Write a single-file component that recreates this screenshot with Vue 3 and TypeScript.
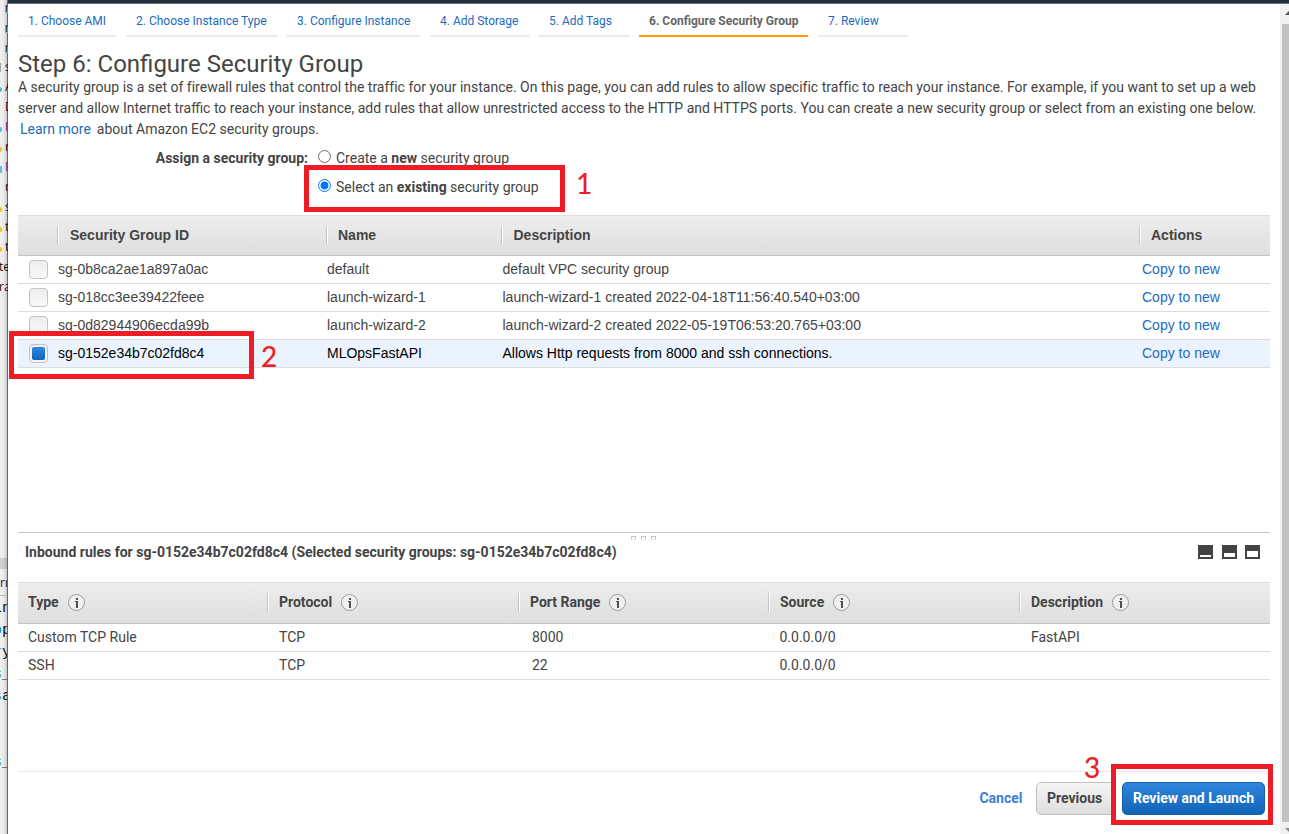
<script setup lang="ts">
interface Tab { label: string; cls: string }
interface Group { id: string; name: string; desc: string; selected?: boolean }
interface Rule { type: string; protocol: string; port: string; source: string; desc: string }
interface EdgeLine { text: string; mark?: string; tone?: string }

const tabs: Tab[] = [
  { label: '1. Choose AMI', cls: 'w1' },
  { label: '2. Choose Instance Type', cls: 'w2' },
  { label: '3. Configure Instance', cls: 'w3' },
  { label: '4. Add Storage', cls: 'w4' },
  { label: '5. Add Tags', cls: 'w5' },
  { label: '6. Configure Security Group', cls: 'w6 active' },
  { label: '7. Review', cls: 'w7' },
]
const groups: Group[] = [
  { id: 'sg-0b8ca2ae1a897a0ac', name: 'default', desc: 'default VPC security group' },
  { id: 'sg-018cc3ee39422feee', name: 'launch-wizard-1', desc: 'launch-wizard-1 created 2022-04-18T11:56:40.540+03:00' },
  { id: 'sg-0d82944906ecda99b', name: 'launch-wizard-2', desc: 'launch-wizard-2 created 2022-05-19T06:53:20.765+03:00' },
  { id: 'sg-0152e34b7c02fd8c4', name: 'MLOpsFastAPI', desc: 'Allows Http requests from 8000 and ssh connections.', selected: true },
]
const ruleHeads: string[] = ['Type', 'Protocol', 'Port Range', 'Source', 'Description']
const rules: Rule[] = [
  { type: 'Custom TCP Rule', protocol: 'TCP', port: '8000', source: '0.0.0.0/0', desc: 'FastAPI' },
  { type: 'SSH', protocol: 'TCP', port: '22', source: '0.0.0.0/0', desc: '' },
]
const files: EdgeLine[] = [
  { text: 'n', tone: 'hl' }, { text: 'n', tone: 'hl' }, { text: 'n', tone: 'hl' },
  { text: 's', mark: 'grey' }, { text: 'A', mark: 'blue' }, { text: 'D', tone: 'maroon' },
  { text: 'I', mark: 'blue', tone: 'purple' }, { text: 'n', mark: 'gold', tone: 'maroon' },
  { text: 'F', mark: 'sq', tone: 'violet' }, { text: 'n', tone: 'maroon' },
  { text: 's', mark: 'gold' }, { text: 't', mark: 'gold' }, { text: 't', mark: 'gold' },
  { text: 'te', tone: 'flush' }, { text: 'ra', tone: 'flush' },
]
const code: { a: string; b: string }[] = [
  { a: '', b: 'in' }, { a: 'o', b: 'p' }, { a: 'r', b: 'y' }, { a: 's', b: '_' },
  { a: 's', b: 'a' }, { a: '', b: '' }, { a: '', b: '' }, { a: 's', b: '_' },
]
</script>

<template>
  <div class="screen">
    <aside class="edge">
      <div class="files">
        <div v-for="(f, i) in files" :key="i" class="file" :class="f.tone">
          <i v-if="f.mark" class="mark" :class="f.mark"></i><span>{{ f.text }}</span>
        </div>
      </div>
      <div class="edge-bar"></div>
      <div class="edge-tab">rr</div>
      <div class="code">
        <div v-for="(c, i) in code" :key="i" class="code-line"><b>{{ c.a }}</b><span>{{ c.b }}</span></div>
      </div>
    </aside>

    <div class="window">
      <div class="topbar"></div>
      <div class="body">
        <main class="content">
          <nav class="tabs">
            <a v-for="t in tabs" :key="t.label" class="tab" :class="t.cls"><span>{{ t.label }}</span></a>
          </nav>
          <h1>Step 6: Configure Security Group</h1>
          <p class="intro">
            <span class="l1">A security group is a set of firewall rules that control the traffic for your instance. On this page, you can add rules to allow specific traffic to reach your instance. For example, if you want to set up a web</span><br>
            <span class="l2">server and allow Internet traffic to reach your instance, add rules that allow unrestricted access to the HTTP and HTTPS ports. You can create a new security group or select from an existing one below.</span><br>
            <span class="l3"><a>Learn more</a>about Amazon EC2 security groups.</span>
          </p>

          <section class="assign">
            <div class="assign-label">Assign a security group:</div>
            <div class="options">
              <div class="option first"><i class="radio"></i><span>Create a <b>new</b> security group</span></div>
              <div class="option"><i class="radio on"></i><span>Select an <b>existing</b> security group</span><em class="box box1"></em><em class="num num1">1</em></div>
            </div>
          </section>

          <section class="groups">
            <div class="g-row g-head">
              <div></div><div class="sep">Security Group ID</div><div class="sep">Name</div><div class="sep">Description</div><div class="sep">Actions</div>
            </div>
            <div v-for="g in groups" :key="g.id" class="g-row g-item" :class="{ selected: g.selected }">
              <div class="check-cell"><i class="check"><i v-if="g.selected"></i></i></div>
              <div>{{ g.id }}</div><div>{{ g.name }}</div><div>{{ g.desc }}</div><div><a>Copy to new</a></div>
              <template v-if="g.selected"><em class="box box2"></em><em class="num num2">2</em></template>
            </div>
          </section>

          <section class="detail">
            <div class="grip"><i></i><i></i><i></i></div>
            <div class="detail-head">
              <h2>Inbound rules for sg-0152e34b7c02fd8c4 (Selected security groups: sg-0152e34b7c02fd8c4)</h2>
              <svg width="62" height="14" viewBox="0 0 62 14" shape-rendering="crispEdges">
                <path fill="#444" d="M0 0h15v14H0zM24 0h15v14H24zM47 0h15v14H47z" />
                <path fill="#fff" d="M2 10h11v2H2zM26 8h11v4H26zM49 6h11v6H49z" />
              </svg>
            </div>
            <div class="r-row r-head">
              <div v-for="h in ruleHeads" :key="h"><span>{{ h }}</span>
                <svg width="18" height="18" viewBox="0 0 18 18">
                  <circle cx="8.5" cy="8.5" r="8" fill="#f0f0f0" stroke="#999" stroke-width="1" />
                  <path d="M8 4h2v2H8zM7 7h3v7H8V8H7z" fill="#505050" />
                </svg>
              </div>
            </div>
            <div v-for="r in rules" :key="r.type" class="r-row r-item">
              <div>{{ r.type }}</div><div>{{ r.protocol }}</div><div>{{ r.port }}</div><div>{{ r.source }}</div><div>{{ r.desc }}</div>
            </div>
          </section>

          <footer>
            <a>Cancel</a>
            <button class="prev">Previous</button>
            <div class="launch-wrap">
              <em class="box box3"></em>
              <button class="launch">Review and Launch</button>
              <em class="num num3">3</em>
            </div>
          </footer>
        </main>
        <div class="scroll">
          <svg width="9" height="20" viewBox="0 0 9 20"><path d="M5 11L9 7v4z" fill="#505050" /></svg>
          <div class="thumb"></div>
          <svg width="9" height="12" viewBox="0 0 9 12"><path d="M5 6h4v4z" fill="#8a8a8a" /></svg>
        </div>
      </div>
    </div>
  </div>
</template>

<style>
body { margin: 0; overflow: hidden; }
</style>

<style scoped>
* { box-sizing: border-box; }
.screen { display: flex; width: 1289px; height: 834px; overflow: hidden; background: #fff; color: #444; font: 14px/20px Roboto, "Liberation Sans", sans-serif; }
a { color: #1c6bbd; }
em, i { font-style: normal; }

.edge { width: 8px; flex: none; overflow: hidden; background: linear-gradient(90deg, #f1f1f1 0, #e8e8e8 4px, #c8c8c8 7px, #686868 7px); display: flex; flex-direction: column; font: 12px/20px "Open Sans", "Noto Sans", sans-serif; color: #111; }
.files { height: 558px; margin-top: -3px; flex: none; }
.file { height: 20px; width: 8px; overflow: hidden; display: flex; align-items: center; justify-content: flex-start; }
.file span { margin-left: 5px; flex: none; }
.mark { width: 2px; height: 5px; flex: none; border-radius: 0 2px 2px 0; margin-top: 4px; }
.mark + span { margin-left: 3px; }
.mark.blue { background: #58b7dc; }
.mark.gold { background: #efc319; }
.mark.grey { background: #9ca6ae; width: 1px; height: 9px; border-radius: 0; margin-top: 0; }
.mark.grey + span { margin-left: 4px; }
.mark.sq { background: #6cbbe0; height: 7px; border-radius: 0; }
.file.hl span { background: #64b9dc; height: 8px; line-height: 6px; margin-top: 4px; overflow: hidden; color: #234; }
.file.maroon { color: #400010; }
.file.purple { color: #7a0a7a; }
.file.violet { color: #5030a8; }
.file.flush span { margin-left: -1px; }
.edge-bar { height: 11px; margin-top: 3px; background: rgba(0, 0, 0, .13); width: 7px; flex: none; }
.edge-tab { height: 27px; flex: none; border-bottom: 1px solid #bbb; width: 7px; line-height: 28px; overflow: hidden; }
.code { padding-top: 2px; font: 15px/22px "Liberation Mono", monospace; width: 7px; overflow: hidden; }
.code-line { display: flex; height: 22px; white-space: nowrap; }
.code-line b { flex: none; margin-left: -7px; font-weight: 400; color: #1686d8; }

.window { flex: 1; min-width: 0; display: flex; flex-direction: column; }
.topbar { height: 4px; background: #232f3e; border-bottom: 1px solid #66707c; flex: none; }
.body { flex: 1; display: flex; min-height: 0; }
.content { width: 1272px; padding: 0 10px; display: flex; flex-direction: column; }
.scroll { width: 9px; background: #f1f1f1; display: flex; flex-direction: column; }
.scroll svg { display: block; flex: none; }
.thumb { flex: 1; margin-left: 2px; background: #c1c1c1; }

.tabs { display: flex; gap: 10px; height: 33px; flex: none; font-size: 12px; }
.tab { border-bottom: 2px solid #eaeaea; padding: 7px 0 0 10px; white-space: nowrap; }
.w1 { width: 98px; } .w2 { width: 151px; } .w3 { width: 133px; } .w4 { width: 99px; }
.w5 { width: 90px; } .w6 { width: 169px; } .w7 { width: 90px; }
.tab.active { border-color: #f90; color: #666; font-weight: 700; }
h1 { margin: 12px 0 0; font-size: 24px; line-height: 30px; font-weight: 400; white-space: nowrap; flex: none; }
.intro { margin: -2px 0 0; line-height: 21px; height: 63px; white-space: nowrap; flex: none; }
.l1 { font-variant-ligatures: none; }
.l3 a { margin: 0 6px 0 2px; }

.assign { display: flex; height: 75px; flex: none; }
.assign-label { width: 290px; text-align: right; font-weight: 700; line-height: 36px; white-space: nowrap; }
.options { padding-left: 10px; }
.option { display: flex; position: relative; height: 29px; line-height: 22px; white-space: nowrap; }
.option.first { margin-top: 7px; }
.radio { width: 13px; height: 13px; margin: 3px 5px 0 0; border: 1px solid #6c6c6c; border-radius: 50%; background: #fff; }
.radio.on { border-color: #0075ff; background: radial-gradient(circle, #0075ff 0 3.7px, #fff 4.3px); }

.box { position: absolute; border: 5px solid #ee1c25; z-index: 2; }
.num { position: absolute; font: 28px/30px Lato, sans-serif; color: #ee1c25; z-index: 3; -webkit-text-stroke: .2px #ee1c25; }
.box1 { left: -14px; top: -11px; width: 261px; height: 47px; }
.num1 { left: 258px; top: -8px; }
.box2 { left: -9px; top: -9px; width: 245px; height: 48px; }
.num2 { left: 243px; top: 1px; }
.box3 { left: -11px; top: -18px; width: 162px; height: 61px; }
.num3 { left: -38px; top: -30px; }

.groups { font-family: "Liberation Sans", Arial, sans-serif; height: 317px; flex: none; }
.g-row { display: grid; grid-template-columns: 39px 269px 175px 638px 1fr; position: relative; }
.g-head, .r-head { background: linear-gradient(#ededed, #dedede); border-top: 1px solid #ddd; border-bottom: 1px solid #c4c4c4; font-weight: 700; }
.g-head { height: 41px; line-height: 39px; }
.g-head .sep { position: relative; padding-left: 12px; }
.g-head .sep:nth-child(2) { padding-left: 13px; }
.g-head .sep:nth-child(4) { padding-left: 12.5px; }
.sep::before { content: ''; position: absolute; left: 0; top: 10px; width: 2px; height: 18px; background: linear-gradient(90deg, #c4c4c4 50%, #fff 50%); }
.g-item { height: 28px; line-height: 26px; border-bottom: 1px solid #ddd; }
.g-item > div { padding-left: 1px; white-space: nowrap; }
.g-item > div:nth-child(4) { padding-left: 1.5px; }
.g-item > div:nth-child(5) { padding-left: 3px; }
.g-item.selected { background: #eaf3fe; color: #000; }
.g-item .check-cell { padding: 4px 0 0 11px; }
.check { display: block; width: 19px; height: 19px; border: 1px solid #c3c3c3; border-radius: 4px; background: linear-gradient(#eee, #f7f7f7); padding: 2px; }
.check i { display: block; width: 13px; height: 13px; border-radius: 2px; background: linear-gradient(#2f86dc, #1265b8); }

.detail { border-top: 1px solid #c5c5c5; height: 239px; flex: none; }
.grip { height: 8px; display: flex; gap: 5px; padding: 3px 0 0 613px; }
.grip i { width: 5px; height: 4px; border: 1px solid #c4c4c4; border-bottom-color: #eee; border-radius: 1px; }
.detail-head { height: 41px; display: flex; justify-content: space-between; padding: 0 10px 0 7px; }
.detail-head svg { margin-top: 4px; }
h2 { margin: 1px 0 0; font-size: 14px; line-height: 20px; font-weight: 700; white-space: nowrap; }
.r-row { display: grid; grid-template-columns: 249px 251px 250px 251px 1fr; }
.r-head { height: 42px; }
.r-head > div { display: flex; align-items: center; gap: 9px; position: relative; padding-left: 12px; white-space: nowrap; }
.r-head span { margin-top: -2px; }
.r-head > div:first-child { padding-left: 10px; }
.r-head > div + div::before { content: ''; position: absolute; left: 0; top: 10px; width: 2px; height: 19px; background: linear-gradient(90deg, #c4c4c4 50%, #fff 50%); }
.r-item { height: 28px; line-height: 27px; border-bottom: 1px solid #ddd; }
.r-item > div { padding-left: 12px; }
.r-item > div:nth-child(1) { padding-left: 10px; }
.r-item > div:nth-child(3) { padding-left: 14px; }
.r-item > div:nth-child(4) { padding-left: 11.5px; }

footer { height: 62px; border-top: 1px solid #e8e8e8; display: flex; padding: 10px 5px 0 0; justify-content: flex-end; font-weight: 700; line-height: 33px; }
footer a { color: #3a80d8; margin-right: 13.5px; }
button { display: block; height: 33px; font: 700 14px/20px Roboto, sans-serif; border-radius: 5px; padding: 0 0 2px; white-space: nowrap; }
.prev { width: 86px; text-align: left; padding-left: 10px; color: #444; background: linear-gradient(#f5f5f5, #dedede); border: 1px solid #bfbfbf; clip-path: inset(0 10px 0 0); }
.launch-wrap { position: relative; width: 143px; height: 33px; }
.launch { position: relative; z-index: 3; width: 143px; padding-bottom: 1px; color: #fff; background: linear-gradient(#2f86dc, #1163b7); border: 1px solid #1160ad; }
</style>
